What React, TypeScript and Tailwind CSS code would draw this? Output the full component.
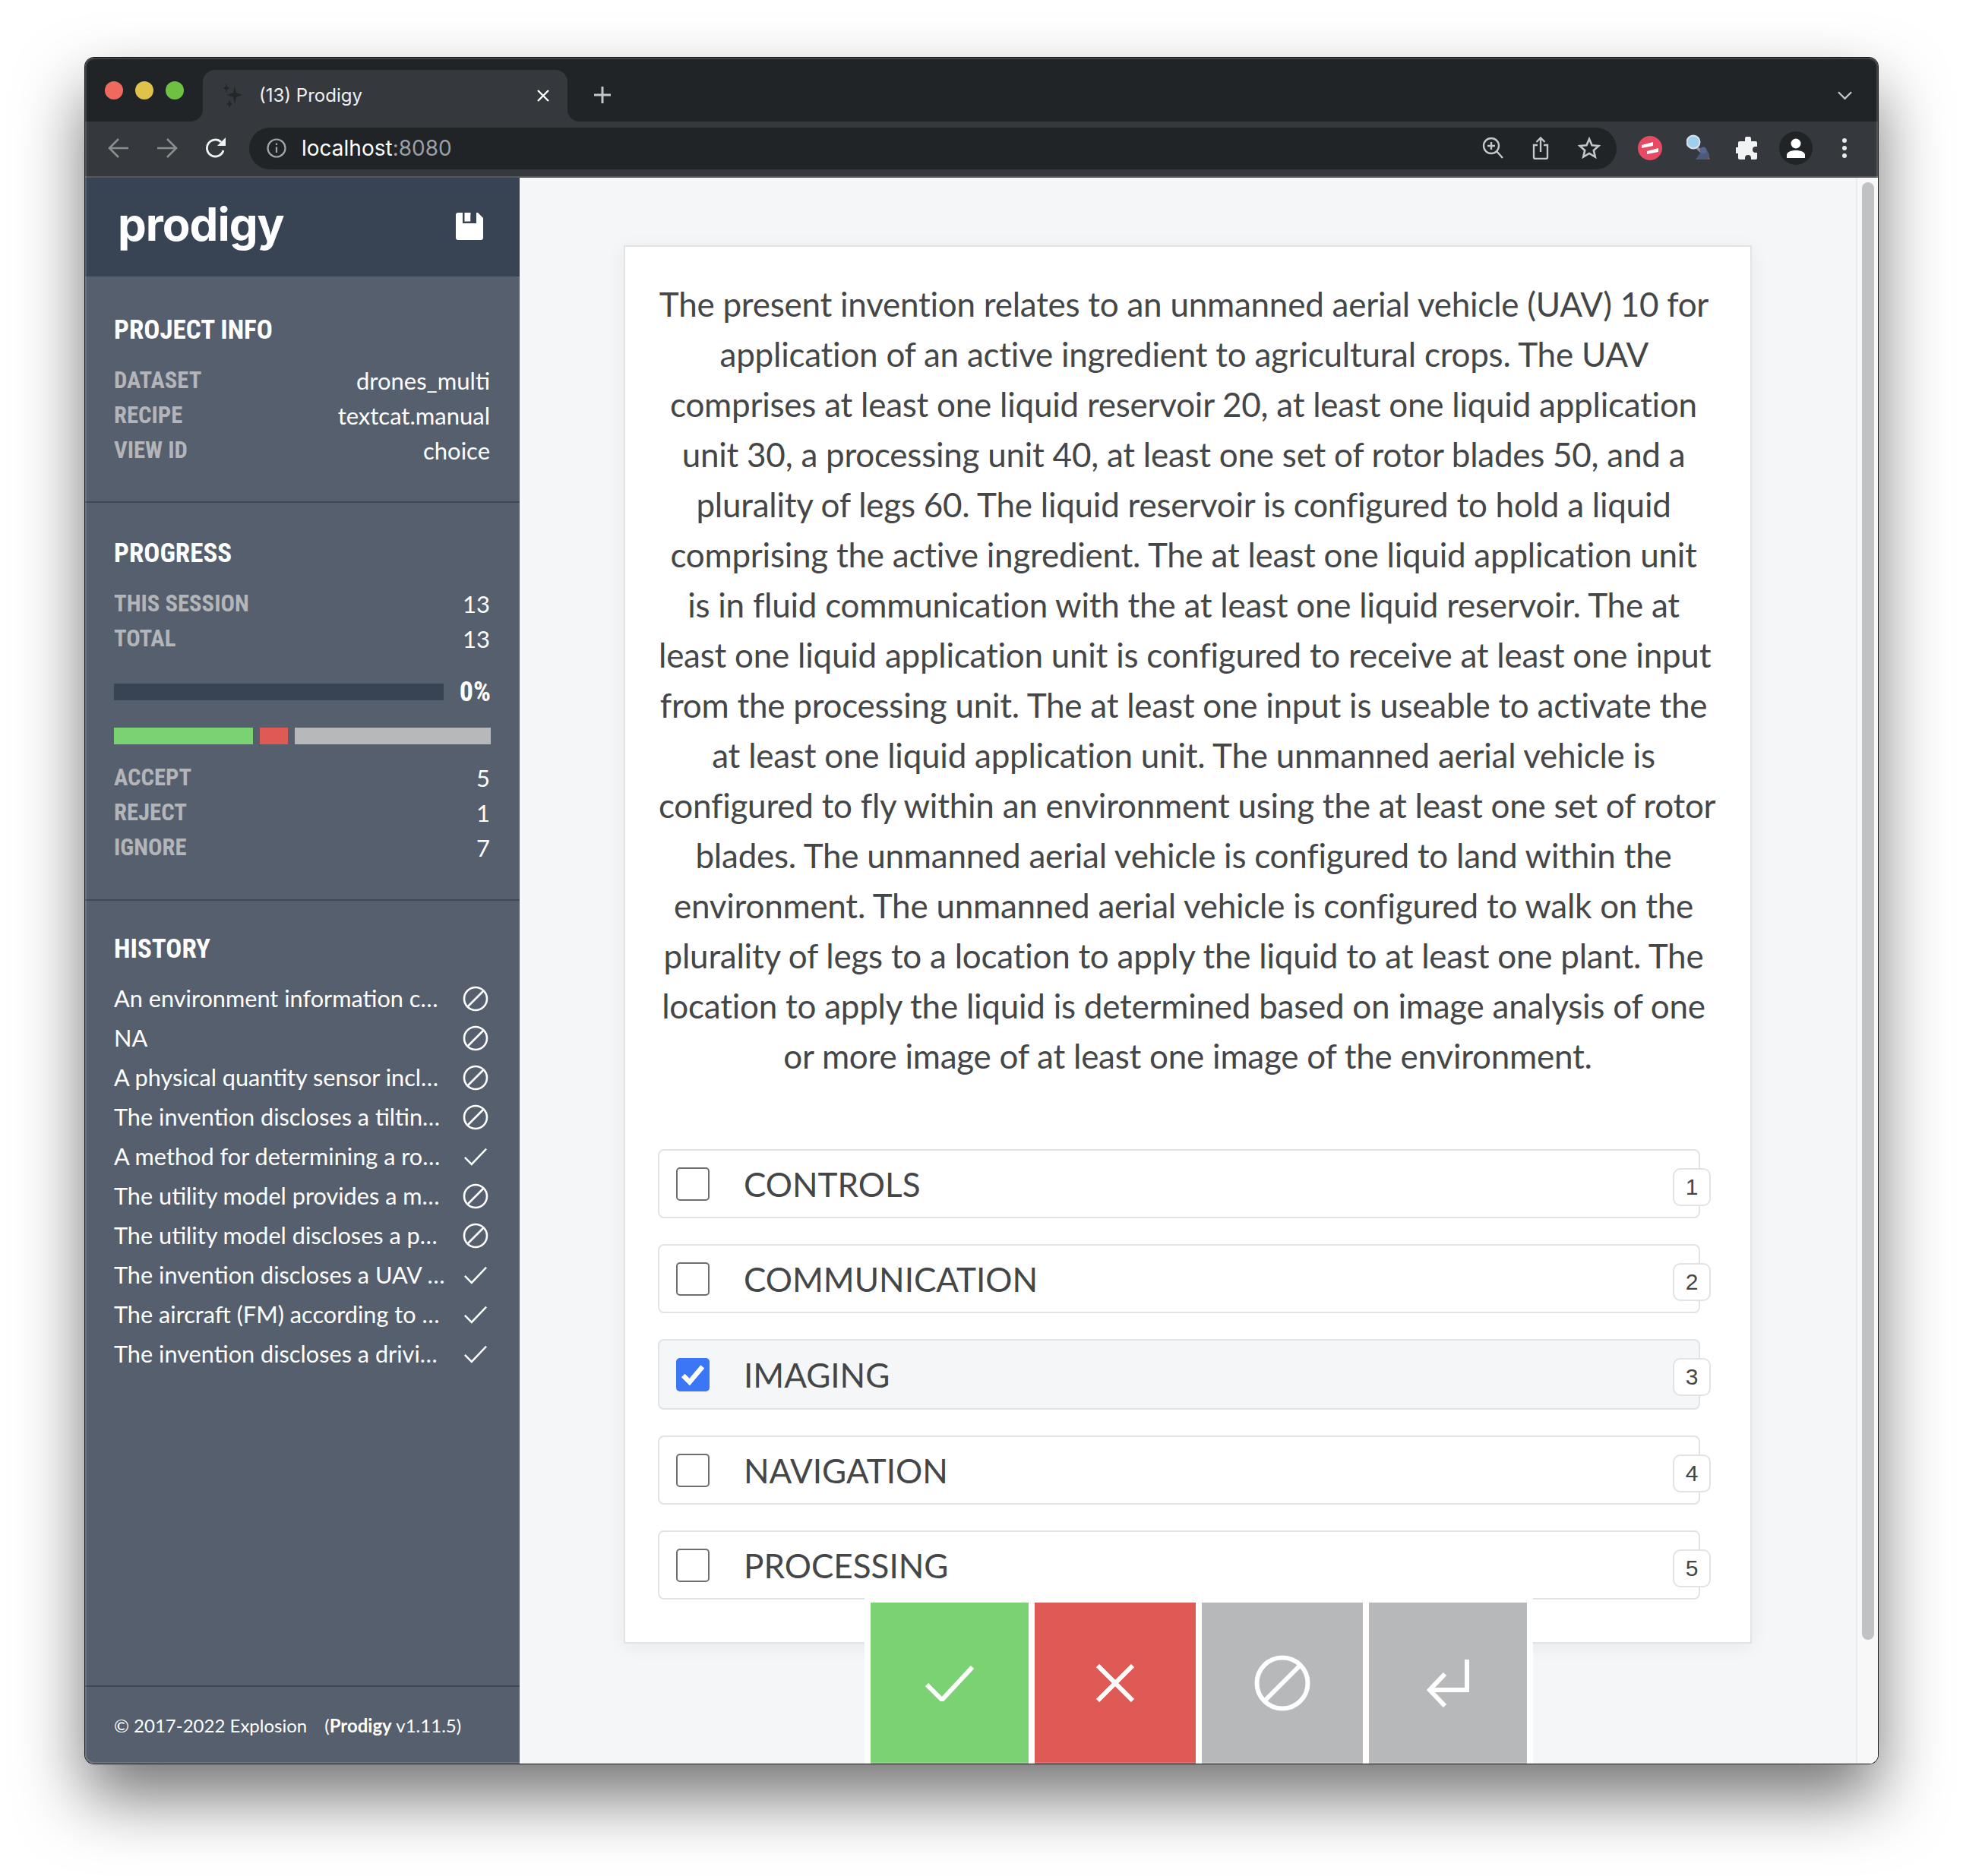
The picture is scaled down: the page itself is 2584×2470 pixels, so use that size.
import type { ReactElement } from "react";

const condensed = "font-['Liberation_Sans_Narrow','Roboto_Condensed','Roboto',sans-serif]";

const LINES = [
  "The present invention relates to an unmanned aerial vehicle (UAV) 10 for ",
  "application of an active ingredient to agricultural crops. The UAV ",
  "comprises at least one liquid reservoir 20, at least one liquid application ",
  "unit 30, a processing unit 40, at least one set of rotor blades 50, and a ",
  "plurality of legs 60. The liquid reservoir is configured to hold a liquid ",
  "comprising the active ingredient. The at least one liquid application unit ",
  "is in fluid communication with the at least one liquid reservoir. The at ",
  "least one liquid application unit is configured to receive at least one input ",
  "from the processing unit. The at least one input is useable to activate the ",
  "at least one liquid application unit. The unmanned aerial vehicle is ",
  "configured to fly within an environment using the at least one set of rotor ",
  "blades. The unmanned aerial vehicle is configured to land within the ",
  "environment. The unmanned aerial vehicle is configured to walk on the ",
  "plurality of legs to a location to apply the liquid to at least one plant. The ",
  "location to apply the liquid is determined based on image analysis of one ",
  "or more image of at least one image of the environment.",
];

const HISTORY: { text: string; accepted: boolean }[] = [
  { text: "An environment information c…", accepted: false },
  { text: "NA", accepted: false },
  { text: "A physical quantity sensor incl…", accepted: false },
  { text: "The invention discloses a tiltin…", accepted: false },
  { text: "A method for determining a ro…", accepted: true },
  { text: "The utility model provides a m…", accepted: false },
  { text: "The utility model discloses a p…", accepted: false },
  { text: "The invention discloses a UAV …", accepted: true },
  { text: "The aircraft (FM) according to …", accepted: true },
  { text: "The invention discloses a drivi…", accepted: true },
];

const OPTIONS = [
  { key: 1, label: "CONTROLS", checked: false },
  { key: 2, label: "COMMUNICATION", checked: false },
  { key: 3, label: "IMAGING", checked: true },
  { key: 4, label: "NAVIGATION", checked: false },
  { key: 5, label: "PROCESSING", checked: false },
];

function Heading({ children }: { children: string }): ReactElement {
  return (
    <h2 className={`h-[46px] text-[35px] leading-[46px] font-bold text-white ${condensed}`}>
      {children}
    </h2>
  );
}

function MetaRow({ label, value }: { label: string; value: string }): ReactElement {
  return (
    <div className="flex h-[46px] items-center justify-between">
      <span className={`text-[30.700px] font-bold text-[#b3b5b8] ${condensed}`}>{label}</span>
      <span className="pr-[1px] text-[31px] font-normal text-white">{value}</span>
    </div>
  );
}

function IgnoreIcon({ className }: { className: string }): ReactElement {
  return (
    <svg viewBox="0 0 34 34" className={className} fill="none" stroke="currentColor" strokeWidth="2.600">
      <circle cx="17" cy="17" r="15" />
      <path d="M7 27 27 7" />
    </svg>
  );
}

function CheckIcon({ className }: { className: string }): ReactElement {
  return (
    <svg viewBox="0 0 34 26" className={className} fill="none" stroke="currentColor" strokeWidth="2.600">
      <path d="M2 14l9.500 9.500L32 2" />
    </svg>
  );
}

function Sidebar(): ReactElement {
  return (
    <aside className="flex w-[572px] shrink-0 flex-col bg-[#555f6e] font-['Lato',sans-serif] text-white">
      <div className="flex h-[130px] shrink-0 items-center justify-between bg-[#384454] pr-[48px] pl-[43px]">
        <span className="pb-[8px] font-['Inter',sans-serif] text-[60px] leading-none font-bold tracking-[-1px] text-white">
          prodigy
        </span>
        <svg viewBox="0 0 36 36" className="mb-[2px] h-[36px] w-[36px]">
          <path
            fill="#ffffff"
            d="M3 0h26l7 7v26a3 3 0 0 1-3 3H3a3 3 0 0 1-3-3V3a3 3 0 0 1 3-3z"
          />
          <rect x="9" y="0" width="18" height="14" fill="#384454" />
          <rect x="11.500" y="0" width="8" height="11.500" fill="#ffffff" />
          <rect x="19.500" y="3" width="4" height="9" fill="#384454" />
        </svg>
      </div>

      <section className="border-b-2 border-[#3c4857] px-[38px] pt-[48px] pb-[44px]">
        <Heading>PROJECT INFO</Heading>
        <div className="mt-[20px]">
          <MetaRow label="DATASET" value="drones_multi" />
          <MetaRow label="RECIPE" value="textcat.manual" />
          <MetaRow label="VIEW ID" value="choice" />
        </div>
      </section>

      <section className="border-b-2 border-[#3c4857] px-[38px] pt-[44px] pb-[45px]">
        <Heading>PROGRESS</Heading>
        <div className="mt-[20px]">
          <MetaRow label="THIS SESSION" value="13" />
          <MetaRow label="TOTAL" value="13" />
        </div>
        <div className="mt-[36px] flex h-[22px] items-center justify-between">
          <div className="h-[22px] w-[434px] bg-[#384454]" />
          <span className={`text-[36px] font-bold text-white ${condensed}`}>0%</span>
        </div>
        <div className="mt-[36px] flex h-[22px] gap-[9px]">
          <div className="w-[183px] bg-[#7ad273]" />
          <div className="w-[37px] bg-[#e05a55]" />
          <div className="flex-1 bg-[#b7b8ba]" />
        </div>
        <div className="mt-[21px]">
          <MetaRow label="ACCEPT" value="5" />
          <MetaRow label="REJECT" value="1" />
          <MetaRow label="IGNORE" value="7" />
        </div>
      </section>

      <section className="flex-1 pt-[41px] pr-[38px] pl-[38px]">
        <Heading>HISTORY</Heading>
        <ul className="mt-[16px]">
          {HISTORY.map((item) => (
            <li key={item.text} className="flex h-[52px] items-center justify-between">
              <span className="text-[30.700px] font-normal whitespace-nowrap text-white">{item.text}</span>
              <span className="mr-[3px] flex w-[34px] shrink-0 justify-center">
                {item.accepted ? (
                  <CheckIcon className="h-[26px] w-[32px]" />
                ) : (
                  <IgnoreIcon className="h-[34px] w-[34px]" />
                )}
              </span>
            </li>
          ))}
        </ul>
      </section>

      <footer className="flex h-[103px] shrink-0 items-center border-t-2 border-[#3c4857] pl-[38px] text-[24px] font-normal text-white">
        <span>© 2017-2022 Explosion</span>
        <span className="ml-[23px]">
          (<b className="font-bold">Prodigy</b> v1.11.5)
        </span>
      </footer>
    </aside>
  );
}

function OptionRow({
  optionKey,
  label,
  checked,
}: {
  optionKey: number;
  label: string;
  checked: boolean;
}): ReactElement {
  return (
    <div
      className={`relative flex items-center rounded-[8px] border-2 border-[#e2e3e4] pl-[22px] ${
        checked ? "h-[93px] bg-[#f5f6f8]" : "h-[91px] bg-white"
      }`}
    >
      {checked ? (
        <span className="flex h-[44px] w-[44px] items-center justify-center rounded-[5px] bg-[#3a76f6]">
          <svg viewBox="0 0 30 26" className="h-[28px] w-[32px]" fill="none" stroke="#ffffff" strokeWidth="6">
            <path d="M3 14l8 8L27 3" />
          </svg>
        </span>
      ) : (
        <span className="h-[44px] w-[44px] rounded-[5px] border-2 border-[#6e6e6e] bg-white" />
      )}
      <span className="ml-[45px] text-[44px] leading-none text-[#444648]">{label}</span>
      <span className="absolute top-[23px] right-[-16px] flex h-[50px] w-[50px] items-center justify-center rounded-[10px] border-2 border-[#e2e3e4] bg-white pb-[2px] font-['Liberation_Sans',sans-serif] text-[30px] text-[#444648]">
        {optionKey}
      </span>
    </div>
  );
}

function ActionBar(): ReactElement {
  return (
    <div className="absolute bottom-0 left-[454px] flex h-[218px] w-[880px] gap-[8px] bg-white px-[8px] pt-[6px]">
      <button className="flex w-[208px] items-center justify-center bg-[#7ad273]">
        <svg viewBox="0 0 64 48" className="h-[48px] w-[64px]" fill="none" stroke="#ffffff" strokeWidth="6">
          <path d="M2 26l20 20L62 3" />
        </svg>
      </button>
      <button className="flex w-[212px] items-center justify-center bg-[#e05a55]">
        <svg viewBox="0 0 50 50" className="h-[50px] w-[50px]" fill="none" stroke="#ffffff" strokeWidth="6">
          <path d="M2 2l46 46M48 2 2 48" />
        </svg>
      </button>
      <button className="flex w-[212px] items-center justify-center bg-[#b7b8ba]">
        <svg viewBox="0 0 74 74" className="h-[74px] w-[74px]" fill="none" stroke="#ffffff" strokeWidth="6">
          <circle cx="37" cy="37" r="33.500" />
          <path d="M13 61 61 13" />
        </svg>
      </button>
      <button className="flex w-[208px] items-center justify-center bg-[#b7b8ba]">
        <svg viewBox="0 0 56 64" className="h-[64px] w-[56px]" fill="none" stroke="#ffffff" strokeWidth="6">
          <path d="M53 1v40H6" />
          <path d="M24 20 4 41l20 21" />
        </svg>
      </button>
    </div>
  );
}

function Content(): ReactElement {
  return (
    <main className="relative flex flex-1 overflow-hidden bg-[#f5f6f8] font-['Lato',sans-serif]">
      <div className="flex-1 pt-[89px]">
        <div className="mx-auto h-[1841px] w-[1485px] border-2 border-[#e2e3e4] bg-white px-[44px] pt-[42px] shadow-[0_4px_24px_rgba(0,0,0,0.06)]">
          <div className="text-center text-[44px] leading-[66px] tracking-[-0.25px] text-[#444648]">
            {LINES.map((line) => (
              <div key={line} className="whitespace-pre">
                {line}
              </div>
            ))}
          </div>
          <div className="mt-[90px] mr-[22px] -ml-[1px] flex flex-col gap-[34px]">
            {OPTIONS.map((option) => (
              <OptionRow
                key={option.key}
                optionKey={option.key}
                label={option.label}
                checked={option.checked}
              />
            ))}
          </div>
        </div>
      </div>
      <div className="w-[29px] shrink-0 border-l-2 border-[#ebecee] bg-[#f8f8f9] pt-[6px] pl-[6px]">
        <div className="h-[1919px] w-[16px] rounded-full bg-[#c1c2c4]" />
      </div>
      <ActionBar />
    </main>
  );
}

function ChromeBar(): ReactElement {
  return (
    <>
      <div className="relative flex h-[84px] shrink-0 bg-[#202427]">
        <div className="flex items-center gap-[16px] pt-[2px] pl-[26px]">
          <span className="h-[24px] w-[24px] rounded-full bg-[#ee6a5e]" />
          <span className="h-[24px] w-[24px] rounded-full bg-[#e0c14b]" />
          <span className="h-[24px] w-[24px] rounded-full bg-[#6fc144]" />
        </div>
        <div className="relative mt-[16px] ml-[25px] flex h-[68px] w-[480px] items-center rounded-t-[16px] bg-[#35393d] pl-[26px]">
          <span className="absolute bottom-0 -left-[16px] h-[16px] w-[16px] bg-[#35393d]">
            <span className="block h-full w-full rounded-br-[16px] bg-[#202427]" />
          </span>
          <span className="absolute -right-[16px] bottom-0 h-[16px] w-[16px] bg-[#35393d]">
            <span className="block h-full w-full rounded-bl-[16px] bg-[#202427]" />
          </span>
          <svg viewBox="0 0 28 34" className="h-[34px] w-[28px]" fill="#23272a">
            <path d="M16 4l2 9 8 3-8 3-2 9-2-9-8-3 8-3z" />
            <path d="M5 0l1 5 3 2-3 2-1 5-1-5-3-2 3-2z" />
            <path d="M9 22l1 4 3 2-3 2-1 4-1-4-3-2 3-2z" />
          </svg>
          <span className="ml-[20px] font-['Inter',sans-serif] text-[24px] text-[#f0f1f2]">(13) Prodigy</span>
          <svg viewBox="0 0 16 16" className="absolute right-[24px] h-[16px] w-[16px]" fill="none" stroke="#ffffff" strokeWidth="2.400">
            <path d="M1 1l14 14M15 1 1 15" />
          </svg>
        </div>
        <svg viewBox="0 0 24 24" className="mt-[37px] ml-[34px] h-[24px] w-[24px]" fill="none" stroke="#c4c7ca" strokeWidth="3">
          <path d="M12 1v22M1 12h22" />
        </svg>
        <svg viewBox="0 0 20 12" className="absolute top-[44px] right-[34px] h-[12px] w-[19px]" fill="none" stroke="#c4c7ca" strokeWidth="2.400">
          <path d="M1 1l9 9 9-9" />
        </svg>
      </div>

      <div className="flex h-[74px] shrink-0 items-center border-b-2 border-[#55585c] bg-[#35393d] pb-[2px]">
        <div className="flex w-[216px] shrink-0 items-center pl-[30px]">
          <svg viewBox="0 0 28 28" className="h-[28px] w-[28px]" fill="none" stroke="#8b8e91" strokeWidth="2.600">
            <path d="M27 14H2M14 2 2 14l12 12" />
          </svg>
          <svg viewBox="0 0 28 28" className="ml-[36px] h-[28px] w-[28px]" fill="none" stroke="#8b8e91" strokeWidth="2.600">
            <path d="M1 14h25M14 2l12 12-12 12" />
          </svg>
          <svg viewBox="0 0 28 30" className="ml-[36px] h-[30px] w-[28px]" fill="none" stroke="#f2f3f4" strokeWidth="2.800">
            <path d="M24 18a11 11 0 1 1-3-11" />
            <path d="M27 1v11H16z" fill="#f2f3f4" stroke="none" />
          </svg>
        </div>
        <div className="flex h-[55px] w-[1800px] shrink-0 items-center rounded-full bg-[#202427] pr-[21px] pl-[23px]">
          <svg viewBox="0 0 26 26" className="h-[26px] w-[26px]" fill="none" stroke="#a3a6a9" strokeWidth="2.200">
            <circle cx="13" cy="13" r="11.500" />
            <path d="M13 11.500v7.500M13 6.500v2.500" />
          </svg>
          <span className="ml-[20px] font-['Inter',sans-serif] text-[28px] text-white">
            localhost<span className="text-[#9aa0a6]">:8080</span>
          </span>
          <div className="ml-auto flex items-center gap-[38px]">
            <svg viewBox="0 0 28 30" className="h-[30px] w-[28px]" fill="none" stroke="#c4c7ca" strokeWidth="2.400">
              <circle cx="12" cy="12" r="10" />
              <path d="M19 19l8 9M12 7v10M7 12h10" />
            </svg>
            <svg viewBox="0 0 22 30" className="h-[30px] w-[22px]" fill="none" stroke="#c4c7ca" strokeWidth="2.400">
              <path d="M7 11H2v16a2 2 0 0 0 2 2h14a2 2 0 0 0 2-2V11h-5" />
              <path d="M11 20V2M5.500 7 11 1.500 16.500 7" />
            </svg>
            <svg viewBox="0 0 30 30" className="h-[30px] w-[30px]" fill="none" stroke="#c4c7ca" strokeWidth="2.600">
              <path d="M15 3l3.600 8.200 8.900.8-6.700 5.900 2 8.700-7.800-4.600-7.800 4.600 2-8.700L2.500 12l8.900-.8z" />
            </svg>
          </div>
        </div>
        <div className="relative flex-1">
          <svg viewBox="0 0 32 32" className="absolute top-[-16px] left-[28px] h-[32px] w-[32px]">
            <circle cx="16" cy="16" r="16" fill="#e74a63" />
            <path d="M5 12l15-4v5l-15 3zM12 20l15-4v5l-15 3z" fill="#ffffff" />
          </svg>
          <svg viewBox="0 0 32 34" className="absolute top-[-18px] left-[92px] h-[34px] w-[32px]">
            <path d="M12 14l9 7-3 3-8-8z" fill="#8a9098" />
            <circle cx="9" cy="10" r="8.500" fill="#9dd0ee" stroke="#dce3e8" strokeWidth="2" />
            <path d="M12 33l5-7 4-6 6 1 3 5-1 7z" fill="#4a5a7c" />
            <circle cx="22" cy="21" r="4.500" fill="#56678c" />
            <path d="M29 28l2 5h-3z" fill="#a5532a" />
          </svg>
          <svg viewBox="0 0 30 30" className="absolute top-[-15px] left-[157px] h-[30px] w-[30px]" fill="#f2f3f4">
            <path d="M12 3a4 4 0 0 1 8 0v3h6a2 2 0 0 1 2 2v5h-2a4 4 0 0 0 0 8h2v7a2 2 0 0 1-2 2h-6v-2a4 4 0 0 0-8 0v2H5a2 2 0 0 1-2-2v-6H1a4 4 0 0 1 0-8h2V8a2 2 0 0 1 2-2h7z" />
          </svg>
          <div className="absolute top-[-22px] left-[214px] flex h-[44px] w-[44px] items-center justify-center rounded-full bg-[#202427]">
            <svg viewBox="0 0 24 26" className="h-[26px] w-[24px]" fill="#ffffff">
              <circle cx="12" cy="7" r="6.500" />
              <path d="M0 26v-4c0-4 6-6 12-6s12 2 12 6v4z" />
            </svg>
          </div>
          <svg viewBox="0 0 6 26" className="absolute top-[-13px] left-[297px] h-[26px] w-[6px]" fill="#e8eaed">
            <circle cx="3" cy="3" r="3" />
            <circle cx="3" cy="13" r="3" />
            <circle cx="3" cy="23" r="3" />
          </svg>
        </div>
      </div>
    </>
  );
}

export default function App(): ReactElement {
  return (
    <div className="h-[2470px] overflow-hidden bg-white pt-[76px] pl-[112px]">
      <div className="relative flex h-[2246px] w-[2360px] flex-col overflow-hidden rounded-[12px] shadow-[0_0_0_1px_#1a1a1a,0_44px_88px_rgba(0,0,0,0.55)]">
        <ChromeBar />
        <div className="flex min-h-0 flex-1">
          <Sidebar />
          <Content />
        </div>
        <div className="pointer-events-none absolute inset-0 rounded-[12px] shadow-[inset_0_0_0_2px_rgba(255,255,255,0.14)]" />
      </div>
    </div>
  );
}
